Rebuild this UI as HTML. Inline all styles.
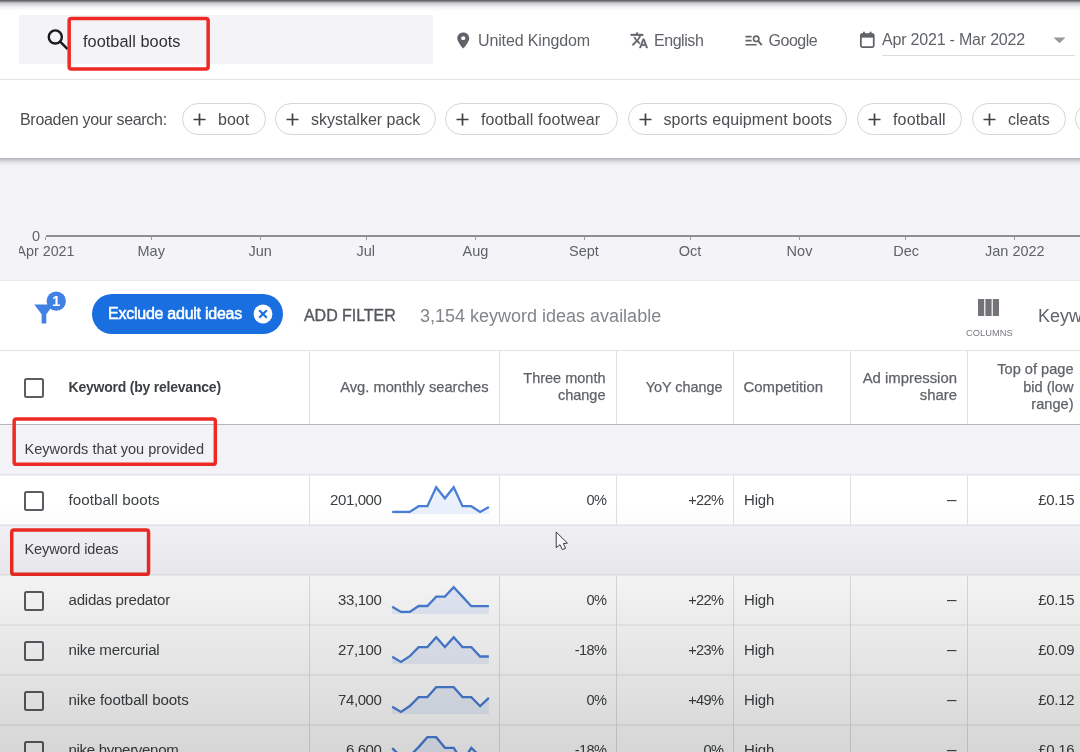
<!DOCTYPE html>
<html lang="en">
<head>
<meta charset="utf-8">
<title>Keyword Planner</title>
<style>
*{box-sizing:border-box;margin:0;padding:0}
html,body{width:1080px;height:752px;overflow:hidden;background:#fff}
body{position:relative;font-family:"Liberation Sans",sans-serif;color:#3c4043;font-size:15px}
#root{position:absolute;left:0;top:0;width:1080px;height:752px;overflow:hidden;will-change:transform}
.abs{position:absolute}
.t{position:absolute;white-space:nowrap;line-height:20px}
/* top bar */
#topshade{left:0;top:0;width:1080px;height:11px;background:linear-gradient(#626168 0,#6a696f 9%,#a9a8ae 18%,#c4c3c9 27%,#d4d3d8 36%,#e9e8ec 55%,#f6f5f8 73%,#fff 100%)}
#searchbox{left:19px;top:15px;width:414px;height:49px;background:#f4f3f8}
#hdrline{left:0;top:79px;width:1080px;height:1px;background:#e3e3e6}
.hd{font-size:16px;color:#5f6368;top:30px}
#dateline{left:882px;top:55px;width:193px;height:1px;background:#dcdce0}
/* chips */
.chip{position:absolute;top:103px;height:32px;border:1px solid #d6d6da;border-radius:16px;background:#fff;font-size:16px;color:#4a4d51;white-space:nowrap;line-height:30px}
.chip svg{position:absolute;left:9.5px;top:9px}
.chip span{position:absolute;left:35px;top:1px}
#shadow1{left:0;top:158px;width:1080px;height:8px;background:linear-gradient(#b6b6bc 0,#bdbdc3 14%,#d6d6db 38%,#e8e8ec 62%,#f3f2f7 100%)}
/* chart */
#chart{left:0;top:158px;width:1080px;height:122px;background:#f4f3f8}
.mon{font-size:14.5px;color:#5f6368;top:241px}
#axis{left:45.5px;top:235px;width:1035px;height:2px;background:#8e8e93}
/* filter bar */
#fbar{left:0;top:280px;width:1080px;height:70px;background:#fff;border-top:1px solid #e9e9ec}
#fchip{left:92px;top:294px;width:191px;height:40px;border-radius:20px;background:#1a6fe0}
/* table */
.vline{position:absolute;width:1px;background:#e0e0e4;top:350px;height:402px}
.hline{position:absolute;left:0;width:1080px;height:1px;background:#dedee1}
.band{position:absolute;left:0;width:1080px;background:#f3f2f7}
.th{font-size:14.5px;color:#5f6368;line-height:17.5px;text-align:right;-webkit-text-stroke:0.25px #5f6368}
.td{font-size:15px;color:#3c4043}
.r{text-align:right}
.cb{position:absolute;left:24px;width:19.5px;height:19.5px;border:2px solid #5a5d61;border-radius:2.5px}
#grad{left:0;top:500px;width:1080px;height:252px;background:linear-gradient(rgba(0,0,0,0) 0,rgba(0,0,0,.02) 15%,rgba(0,0,0,.07) 45%,rgba(0,0,0,.16) 100%)}
</style>
</head>
<body>
<div id="root">
<!-- ========== top header ========== -->
<div class="abs" id="searchbox"></div>
<svg class="abs" style="left:46px;top:28px" width="24" height="24" viewBox="0 0 24 24"><circle cx="9.3" cy="8.95" r="6.55" fill="none" stroke="#1a1a1c" stroke-width="2.4"/><path d="M13.9 13.4L21.6 21.2" stroke="#1a1a1c" stroke-width="2.5" stroke-linecap="butt"/></svg>
<div class="t" style="left:83px;top:31px;font-size:16.3px;color:#2f3135;letter-spacing:0.05px">football boots</div>

<!-- location -->
<svg class="abs" style="left:452.8px;top:31px" width="20.5" height="19" viewBox="0 0 24 24" preserveAspectRatio="none"><path fill="#5f6368" d="M12 2C8.13 2 5 5.13 5 9c0 5.25 7 13 7 13s7-7.75 7-13c0-3.87-3.13-7-7-7zm0 9.5a2.5 2.5 0 0 1 0-5 2.5 2.5 0 0 1 0 5z"/></svg>
<div class="t hd" style="left:478px;top:31px;letter-spacing:-0.13px">United Kingdom</div>
<!-- language -->
<svg class="abs" style="left:629.5px;top:31px" width="18.6" height="18.6" viewBox="0 0 24 24"><path fill="#5f6368" stroke="#5f6368" stroke-width="0.5" d="M12.87 15.07l-2.54-2.51.03-.03A17.52 17.52 0 0 0 14.07 6H17V4h-7V2H8v2H1v1.99h11.17C11.5 7.92 10.44 9.75 9 11.35 8.07 10.32 7.3 9.19 6.69 8h-2c.73 1.63 1.73 3.17 2.98 4.56l-5.09 5.02L4 19l5-5 3.11 3.11.76-2.04zM18.5 10h-2L12 22h2l1.12-3h4.75L21 22h2l-4.5-12zm-2.62 7l1.62-4.33L19.12 17h-3.24z"/></svg>
<div class="t hd" style="left:654px;top:31px;letter-spacing:-0.45px">English</div>
<!-- network -->
<svg class="abs" style="left:745px;top:35px" width="18" height="12" viewBox="0 0 18 12"><g fill="none" stroke="#5f6368" stroke-width="1.6"><path d="M0.5 1.6H6.6M0.5 5.65H6.6M0.5 9.75H11.6"/><circle cx="11.2" cy="3.8" r="2.7"/><path d="M13.1 5.8L16.8 10.1" stroke-width="1.9"/></g></svg>
<div class="t hd" style="left:768.6px;top:31px;letter-spacing:-0.5px">Google</div>
<!-- date -->
<svg class="abs" style="left:859px;top:31.2px" width="16.6" height="17.5" viewBox="0 0 18 19"><rect x="2" y="3.4" width="14" height="14" rx="1.3" fill="none" stroke="#5f6368" stroke-width="1.9"/><rect x="2" y="3" width="14" height="4.2" fill="#5f6368"/><rect x="4.4" y="0.8" width="2" height="3" fill="#5f6368"/><rect x="11.6" y="0.8" width="2" height="3" fill="#5f6368"/></svg>
<div class="t hd" style="left:882px;letter-spacing:-0.2px">Apr 2021 - Mar 2022</div>
<div class="abs" id="dateline"></div>
<svg class="abs" style="left:1053px;top:37px" width="13" height="7" viewBox="0 0 13 7"><path d="M0.5 0.5H12.5L6.5 6.2z" fill="#95999e"/></svg>
<svg class="abs" style="left:60px;top:10px" width="160" height="70" viewBox="60 10 160 70"><rect x="69.15" y="18.45" width="139" height="50.6" rx="2.2" fill="none" stroke="#ee2a24" stroke-width="3.5"/></svg>
<div class="abs" id="hdrline"></div>
<div class="abs" id="topshade"></div>

<!-- ========== broaden row ========== -->
<div class="t" style="left:20px;top:110px;font-size:16px;color:#4a4d51;letter-spacing:-0.31px">Broaden your search:</div>

<div class="chip" style="left:182px;width:84px"><svg width="13" height="13" viewBox="0 0 13 13"><path d="M6.5 0.5V12.5M0.5 6.5H12.5" stroke="#3c4043" stroke-width="1.7" fill="none"/></svg><span>boot</span></div>
<div class="chip" style="left:275px;width:161px"><svg width="13" height="13" viewBox="0 0 13 13"><path d="M6.5 0.5V12.5M0.5 6.5H12.5" stroke="#3c4043" stroke-width="1.7" fill="none"/></svg><span>skystalker pack</span></div>
<div class="chip" style="left:445px;width:173px"><svg width="13" height="13" viewBox="0 0 13 13"><path d="M6.5 0.5V12.5M0.5 6.5H12.5" stroke="#3c4043" stroke-width="1.7" fill="none"/></svg><span style="letter-spacing:.1px">football footwear</span></div>
<div class="chip" style="left:628px;width:219px"><svg width="13" height="13" viewBox="0 0 13 13"><path d="M6.5 0.5V12.5M0.5 6.5H12.5" stroke="#3c4043" stroke-width="1.7" fill="none"/></svg><span style="letter-spacing:.1px;left:34.5px">sports equipment boots</span></div>
<div class="chip" style="left:857px;width:105px"><svg width="13" height="13" viewBox="0 0 13 13"><path d="M6.5 0.5V12.5M0.5 6.5H12.5" stroke="#3c4043" stroke-width="1.7" fill="none"/></svg><span style="letter-spacing:.15px">football</span></div>
<div class="chip" style="left:972px;width:94px"><svg width="13" height="13" viewBox="0 0 13 13"><path d="M6.5 0.5V12.5M0.5 6.5H12.5" stroke="#3c4043" stroke-width="1.7" fill="none"/></svg><span>cleats</span></div>
<div class="chip" style="left:1075px;width:60px"><svg width="13" height="13" viewBox="0 0 13 13"><path d="M6.5 0.5V12.5M0.5 6.5H12.5" stroke="#3c4043" stroke-width="1.7" fill="none"/></svg><span></span></div>
<!-- ========== chart ========== -->
<div class="abs" id="chart"></div>
<div class="abs" id="shadow1"></div>
<div class="abs" id="axis"></div>
<div class="abs" style="left:45px;top:237px;width:1px;height:3px;background:#9a9aa0"></div><div class="abs" style="left:151px;top:237px;width:1px;height:3px;background:#9a9aa0"></div><div class="abs" style="left:260px;top:237px;width:1px;height:3px;background:#9a9aa0"></div><div class="abs" style="left:366px;top:237px;width:1px;height:3px;background:#9a9aa0"></div><div class="abs" style="left:475px;top:237px;width:1px;height:3px;background:#9a9aa0"></div><div class="abs" style="left:584px;top:237px;width:1px;height:3px;background:#9a9aa0"></div><div class="abs" style="left:690px;top:237px;width:1px;height:3px;background:#9a9aa0"></div><div class="abs" style="left:799px;top:237px;width:1px;height:3px;background:#9a9aa0"></div><div class="abs" style="left:905px;top:237px;width:1px;height:3px;background:#9a9aa0"></div><div class="abs" style="left:1014px;top:237px;width:1px;height:3px;background:#9a9aa0"></div>
<div class="t mon" style="left:32px;top:226px">0</div>
<div class="abs" style="left:19px;top:241px;width:70px;height:20px;overflow:hidden"><div class="t mon" style="left:-2.5px;top:0;font-size:14.3px">Apr 2021</div></div>
<div class="t mon" style="left:137.5px">May</div>
<div class="t mon" style="left:248.5px">Jun</div>
<div class="t mon" style="left:356.5px">Jul</div>
<div class="t mon" style="left:462.5px">Aug</div>
<div class="t mon" style="left:569px">Sept</div>
<div class="t mon" style="left:678.8px">Oct</div>
<div class="t mon" style="left:786.6px">Nov</div>
<div class="t mon" style="left:893.3px">Dec</div>
<div class="t mon" style="left:985px">Jan 2022</div>


<!-- ========== filter bar ========== -->
<div class="abs" id="fbar"></div>
<div class="abs" id="fchip"></div>
<svg class="abs" style="left:32px;top:289px" width="36" height="38" viewBox="0 0 36 38"><path d="M2.3 15.6H21.6L14.3 25.3V34.6H9.6V25.3z" fill="#4180e4"/><circle cx="24.25" cy="12.1" r="9.7" fill="#4180e4"/></svg>
<div class="t" style="left:52px;top:291px;font-size:15px;font-weight:700;color:#fff">1</div>
<div class="t" style="left:108px;top:304px;font-size:16px;color:#fff;letter-spacing:-0.25px;-webkit-text-stroke:0.5px #fff">Exclude adult ideas</div>
<svg class="abs" style="left:253px;top:304px" width="20" height="20" viewBox="0 0 20 20"><circle cx="10" cy="10" r="9.4" fill="#fff"/><path d="M6.2 6.2L13.8 13.8M13.8 6.2L6.2 13.8" stroke="#1a6fe0" stroke-width="2.1"/></svg>
<div class="t" style="left:304px;top:306px;font-size:16px;color:#55585c;letter-spacing:-0.05px;-webkit-text-stroke:0.35px #55585c">ADD FILTER</div>
<div class="t" style="left:420px;top:306px;font-size:18px;color:#80868b">3,154 keyword ideas available</div>
<svg class="abs" style="left:978px;top:299px" width="21" height="17" viewBox="0 0 21 17"><rect x="0" y="0" width="6.2" height="17" fill="#737378"/><rect x="7.4" y="0" width="6.2" height="17" fill="#737378"/><rect x="14.8" y="0" width="6.2" height="17" fill="#737378"/></svg>
<div class="t" style="left:966px;top:323px;font-size:9.3px;color:#75797e;letter-spacing:0.05px">COLUMNS</div>
<div class="t" style="left:1038px;top:306px;font-size:18px;color:#5f6368">Keyword view</div>


<!-- ========== table ========== -->
<div id="table">
<div class="band" style="top:425px;height:50px"></div>
<div class="band" style="top:525px;height:50px"></div>
<div class="hline" style="top:350px;background:#e2e2e5"></div>
<div class="hline" style="top:424px;height:1px;background:#b7b7bd"></div>
<div class="hline" style="top:474px;height:2px;background:rgba(20,20,40,.06)"></div>
<div class="hline" style="top:524px;height:2px;background:rgba(20,20,40,.06)"></div>
<div class="hline" style="top:574px;height:2px;background:rgba(20,20,40,.06)"></div>
<div class="hline" style="top:624px;height:2px;background:rgba(20,20,40,.06)"></div>
<div class="hline" style="top:674px;height:2px;background:rgba(20,20,40,.06)"></div>
<div class="hline" style="top:724px;height:2px;background:rgba(20,20,40,.06)"></div>
<div class="vline" style="left:309px;top:351px;height:73px"></div>
<div class="vline" style="left:309px;top:476px;height:49px"></div>
<div class="vline" style="left:309px;top:576px;height:176px"></div>
<div class="vline" style="left:499px;top:351px;height:73px"></div>
<div class="vline" style="left:499px;top:476px;height:49px"></div>
<div class="vline" style="left:499px;top:576px;height:176px"></div>
<div class="vline" style="left:616px;top:351px;height:73px"></div>
<div class="vline" style="left:616px;top:476px;height:49px"></div>
<div class="vline" style="left:616px;top:576px;height:176px"></div>
<div class="vline" style="left:733px;top:351px;height:73px"></div>
<div class="vline" style="left:733px;top:476px;height:49px"></div>
<div class="vline" style="left:733px;top:576px;height:176px"></div>
<div class="vline" style="left:850px;top:351px;height:73px"></div>
<div class="vline" style="left:850px;top:476px;height:49px"></div>
<div class="vline" style="left:850px;top:576px;height:176px"></div>
<div class="vline" style="left:967px;top:351px;height:73px"></div>
<div class="vline" style="left:967px;top:476px;height:49px"></div>
<div class="vline" style="left:967px;top:576px;height:176px"></div>
<div class="cb" style="top:378px"></div>
<div class="t" style="left:68.5px;top:377px;font-size:14px;font-weight:700;color:#3c4043;letter-spacing:-0.22px">Keyword (by relevance)</div>
<div class="t th" style="right:591.5px;top:378.5px;font-size:14.7px;letter-spacing:0px">Avg. monthly searches</div>
<div class="t th" style="right:474.5px;top:369.5px;font-size:14.5px;letter-spacing:0px">Three month<br>change</div>
<div class="t th" style="right:357.5px;top:378.5px;font-size:14.4px;letter-spacing:0px">YoY change</div>
<div class="t th" style="left:743.5px;top:378.5px;font-size:14.9px">Competition</div>
<div class="t th" style="right:123px;top:369.5px;font-size:14.9px;letter-spacing:0px">Ad impression<br>share</div>
<div class="t th" style="right:6.5px;top:361px;font-size:14.6px;letter-spacing:0px">Top of page<br>bid (low<br>range)</div>
<div class="t" style="left:24.5px;top:439px;font-size:14.55px;color:#3c4043">Keywords that you provided</div>
<div class="t" style="left:24.5px;top:539px;font-size:14.55px;color:#3c4043;letter-spacing:-0.12px">Keyword ideas</div>
<div class="cb" style="top:491px"></div>
<div class="t td" style="left:68.5px;top:490px;font-size:15.1px;letter-spacing:0.1px">football boots</div>
<div class="t td r" style="right:698.5px;top:490px;letter-spacing:-0.4px">201,000</div>
<svg class="abs" style="left:391px;top:485px" width="100" height="30" viewBox="0 0 100 30"><path d="M1.2 26.9 L10.0 26.9 L18.8 26.9 L27.6 21.2 L36.4 21.2 L45.2 2.2 L53.9 13.3 L62.7 2.2 L71.5 21.2 L80.3 21.2 L89.1 26.9 L97.9 22.0 L97.9 29 L1.2 29 Z" fill="rgba(66,120,230,.11)"/><path d="M1.2 26.9 L10.0 26.9 L18.8 26.9 L27.6 21.2 L36.4 21.2 L45.2 2.2 L53.9 13.3 L62.7 2.2 L71.5 21.2 L80.3 21.2 L89.1 26.9 L97.9 22.0" fill="none" stroke="#4a7fd6" stroke-width="2.3" stroke-linejoin="miter"/></svg>
<div class="t td r" style="right:473.5px;top:490px;font-size:14.6px;letter-spacing:-0.55px">0%</div>
<div class="t td r" style="right:356.5px;top:490px;font-size:14.6px;letter-spacing:-0.6px">+22%</div>
<div class="t td" style="left:744px;top:490px;letter-spacing:-0.2px">High</div>
<div class="t td r" style="right:123.5px;top:490px;font-size:17px">–</div>
<div class="t td r" style="right:5.7000000000000455px;top:490px;letter-spacing:-0.3px">£0.15</div>
<div class="cb" style="top:591px"></div>
<div class="t td" style="left:68.5px;top:590px;font-size:15.1px;letter-spacing:-0.23px">adidas predator</div>
<div class="t td r" style="right:698.5px;top:590px;letter-spacing:-0.4px">33,100</div>
<svg class="abs" style="left:391px;top:585px" width="100" height="30" viewBox="0 0 100 30"><path d="M1.2 21.7 L10.0 26.9 L18.8 26.9 L27.6 21.0 L36.4 21.0 L45.2 11.6 L53.9 11.6 L62.7 2.2 L71.5 11.6 L80.3 21.2 L89.1 21.2 L97.9 21.2 L97.9 29 L1.2 29 Z" fill="rgba(66,120,230,.11)"/><path d="M1.2 21.7 L10.0 26.9 L18.8 26.9 L27.6 21.0 L36.4 21.0 L45.2 11.6 L53.9 11.6 L62.7 2.2 L71.5 11.6 L80.3 21.2 L89.1 21.2 L97.9 21.2" fill="none" stroke="#4a7fd6" stroke-width="2.3" stroke-linejoin="miter"/></svg>
<div class="t td r" style="right:473.5px;top:590px;font-size:14.6px;letter-spacing:-0.55px">0%</div>
<div class="t td r" style="right:356.5px;top:590px;font-size:14.6px;letter-spacing:-0.6px">+22%</div>
<div class="t td" style="left:744px;top:590px;letter-spacing:-0.2px">High</div>
<div class="t td r" style="right:123.5px;top:590px;font-size:17px">–</div>
<div class="t td r" style="right:5.7000000000000455px;top:590px;letter-spacing:-0.3px">£0.15</div>
<div class="cb" style="top:641px"></div>
<div class="t td" style="left:68.5px;top:640px;font-size:15.1px;letter-spacing:-0.21px">nike mercurial</div>
<div class="t td r" style="right:698.5px;top:640px;letter-spacing:-0.4px">27,100</div>
<svg class="abs" style="left:391px;top:635px" width="100" height="30" viewBox="0 0 100 30"><path d="M1.2 21.7 L10.0 26.9 L18.8 21.2 L27.6 12.1 L36.4 12.1 L45.2 2.2 L53.9 12.1 L62.7 2.2 L71.5 12.1 L80.3 12.1 L89.1 21.5 L97.9 21.5 L97.9 29 L1.2 29 Z" fill="rgba(66,120,230,.11)"/><path d="M1.2 21.7 L10.0 26.9 L18.8 21.2 L27.6 12.1 L36.4 12.1 L45.2 2.2 L53.9 12.1 L62.7 2.2 L71.5 12.1 L80.3 12.1 L89.1 21.5 L97.9 21.5" fill="none" stroke="#4a7fd6" stroke-width="2.3" stroke-linejoin="miter"/></svg>
<div class="t td r" style="right:473.5px;top:640px;font-size:14.6px;letter-spacing:-0.55px">-18%</div>
<div class="t td r" style="right:356.5px;top:640px;font-size:14.6px;letter-spacing:-0.6px">+23%</div>
<div class="t td" style="left:744px;top:640px;letter-spacing:-0.2px">High</div>
<div class="t td r" style="right:123.5px;top:640px;font-size:17px">–</div>
<div class="t td r" style="right:5.7000000000000455px;top:640px;letter-spacing:-0.3px">£0.09</div>
<div class="cb" style="top:691px"></div>
<div class="t td" style="left:68.5px;top:690px;font-size:15.1px;letter-spacing:-0.08px">nike football boots</div>
<div class="t td r" style="right:698.5px;top:690px;letter-spacing:-0.4px">74,000</div>
<svg class="abs" style="left:391px;top:685px" width="100" height="30" viewBox="0 0 100 30"><path d="M1.2 21.7 L10.0 26.9 L18.8 21.0 L27.6 12.1 L36.4 12.1 L45.2 2.2 L53.9 2.2 L62.7 2.2 L71.5 12.1 L80.3 12.1 L89.1 21.2 L97.9 12.8 L97.9 29 L1.2 29 Z" fill="rgba(66,120,230,.11)"/><path d="M1.2 21.7 L10.0 26.9 L18.8 21.0 L27.6 12.1 L36.4 12.1 L45.2 2.2 L53.9 2.2 L62.7 2.2 L71.5 12.1 L80.3 12.1 L89.1 21.2 L97.9 12.8" fill="none" stroke="#4a7fd6" stroke-width="2.3" stroke-linejoin="miter"/></svg>
<div class="t td r" style="right:473.5px;top:690px;font-size:14.6px;letter-spacing:-0.55px">0%</div>
<div class="t td r" style="right:356.5px;top:690px;font-size:14.6px;letter-spacing:-0.6px">+49%</div>
<div class="t td" style="left:744px;top:690px;letter-spacing:-0.2px">High</div>
<div class="t td r" style="right:123.5px;top:690px;font-size:17px">–</div>
<div class="t td r" style="right:5.7000000000000455px;top:690px;letter-spacing:-0.3px">£0.12</div>
<div class="cb" style="top:741px"></div>
<div class="t td" style="left:68.5px;top:740px;font-size:15.1px;letter-spacing:-0.33px">nike hypervenom</div>
<div class="t td r" style="right:698.5px;top:740px;letter-spacing:-0.4px">6,600</div>
<svg class="abs" style="left:391px;top:735px" width="100" height="30" viewBox="0 0 100 30"><path d="M1.2 13.1 L10.0 21.5 L18.8 21.0 L27.6 12.1 L36.4 2.2 L45.2 2.2 L53.9 12.8 L62.7 12.8 L71.5 26.9 L80.3 12.8 L89.1 21.5 L97.9 21.5 L97.9 29 L1.2 29 Z" fill="rgba(66,120,230,.11)"/><path d="M1.2 13.1 L10.0 21.5 L18.8 21.0 L27.6 12.1 L36.4 2.2 L45.2 2.2 L53.9 12.8 L62.7 12.8 L71.5 26.9 L80.3 12.8 L89.1 21.5 L97.9 21.5" fill="none" stroke="#4a7fd6" stroke-width="2.3" stroke-linejoin="miter"/></svg>
<div class="t td r" style="right:473.5px;top:740px;font-size:14.6px;letter-spacing:-0.55px">-18%</div>
<div class="t td r" style="right:356.5px;top:740px;font-size:14.6px;letter-spacing:-0.6px">0%</div>
<div class="t td" style="left:744px;top:740px;letter-spacing:-0.2px">High</div>
<div class="t td r" style="right:123.5px;top:740px;font-size:17px">–</div>
<div class="t td r" style="right:5.7000000000000455px;top:740px;letter-spacing:-0.3px">£0.16</div>
<svg class="abs" style="left:5px;top:410px" width="220" height="65" viewBox="5 410 220 65"><rect x="14.15" y="418.95" width="201.2" height="45.4" rx="2.2" fill="none" stroke="#ee2a24" stroke-width="3.5"/></svg>
<svg class="abs" style="left:5px;top:520px" width="155" height="65" viewBox="5 520 155 65"><rect x="11.75" y="529.95" width="136.8" height="44.4" rx="2.2" fill="none" stroke="#ee2a24" stroke-width="3.5"/></svg>
<div class="abs" id="grad"></div>
<svg class="abs" style="left:555px;top:531px" width="14" height="21" viewBox="0 0 14 21"><path d="M1.2 1V16.7L5 13.7L7.3 18.6L10.6 17.3L8.4 12.6L12.4 12.1z" fill="rgba(255,255,255,.6)" stroke="#303034" stroke-width="0.95" stroke-linejoin="round"/></svg>
</div><!--/table-->
</div><!--/root-->
</body>
</html>
